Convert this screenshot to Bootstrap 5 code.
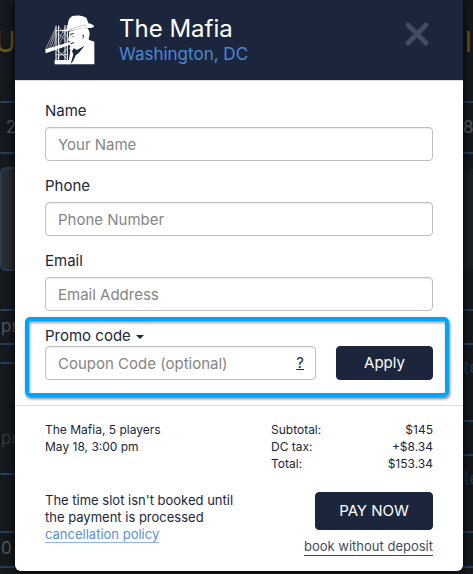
<!DOCTYPE html>
<html lang="en">
<head>
<meta charset="utf-8">
<meta name="viewport" content="width=device-width, initial-scale=1">
<title>The Mafia – Booking</title>
<link href="https://cdn.jsdelivr.net/npm/bootstrap@5.3.0/dist/css/bootstrap.min.css" rel="stylesheet">
<style>
  :root { --navy: #1b263d; --line: #263d59; }
  body { background: #15181d; color: var(--navy); font-family: Inter, "Open Sans", sans-serif; font-size: 15px; line-height: 20px; }
  .booking { border-radius: 0 0 6px 6px; box-shadow: 0 0 10px #000; z-index: 1; }
  .booking-head { background: var(--navy); height: 81px; border-bottom: 1px solid #d9d9d9; padding: 0 30px; }
  .venue-title { font-size: 24px; line-height: 28px; }
  .venue-city { color: #4a88d8; font-size: 17px; line-height: 22px; }
  .close-x { color: #414c62; margin-bottom: 12px; }
  .fields { padding: 20px 30px 6px; }
  .fields .form-label { margin-bottom: 6px; }
  .field + .field { margin-top: 15px; }
  .form-control { height: 34px; padding: 6px 12px; font-size: 15px; line-height: 20px; border-color: #bfbfbf; border-radius: 4px; color: var(--navy); box-shadow: inset 0 1px 1px rgba(0,0,0,.07); }
  .form-control::placeholder { color: #858585; }
  .promo { margin: 0 14px 8px 10px; padding: 5px 12px 13px 16px; border: 4px solid #00a2ff; border-radius: 5px; box-shadow: 1px 2px 3px rgba(0,0,0,.5), inset 1px 2px 3px rgba(0,0,0,.4); }
  .promo-toggle { line-height: 20px; color: var(--navy); }
  .promo-toggle::after { margin-left: 5px; vertical-align: 2px; border-width: 4px 4px 0; }
  .promo .form-control { padding-right: 36px; }
  .promo-row { gap: 20px; }
  .hint { right: 12px; top: 7px; color: var(--navy); }
  .btn-navy { --bs-btn-color: #fff; --bs-btn-bg: var(--navy); --bs-btn-border-color: var(--navy); --bs-btn-hover-color: #fff; --bs-btn-hover-bg: #2a3957; --bs-btn-hover-border-color: #2a3957; --bs-btn-border-radius: 4px; --bs-btn-font-size: 15px; line-height: 20px; }
  .btn-apply { width: 97px; height: 34px; padding: 0; }
  .btn-pay { width: 118px; height: 38px; padding: 0; }
  .summary { border-top: 1px solid #ddd; padding: 15px 30px; font-size: 12px; line-height: 17px; }
  .totals { width: 162px; }
  .totals td { padding: 0; }
  .actions { padding-top: 20px; font-size: 13px; }
  .policy { color: #5b8fd9; text-decoration: none; border-bottom: 1px solid #8fb6ec; line-height: 15px; }
  .no-deposit { color: #434b5e; text-decoration: none; border-bottom: 1px solid #434b5e; }
  /* slivers of the schedule page on both sides of the dialog */
  .edge { flex: none; overflow: hidden; white-space: nowrap; color: #55585c; font-size: 17px; }
  .edge-start { width: 15px; }
  .edge-end { width: 10px; }
  .slot { border-top: 2px solid var(--line); padding-left: 1px; }
  .edge-end .slot { padding-left: 0; }
  .gold { color: #705719; font-size: 28px; height: 101px; line-height: 84px; text-indent: -5px; }
  .edge-end .gold { text-indent: 2px; }
  .h-19 { height: 19px; } .h-34 { height: 34px; line-height: 30px; } .h-35 { height: 35px; line-height: 30px; }
  .h-51 { height: 51px; line-height: 48px; } .h-58 { height: 58px; } .h-77 { height: 77px; line-height: 44px; }
  .h-111 { height: 111px; line-height: 148px; }
  .dim { color: #34383d; }
  .blue { color: #20334b; font-size: 20px; }
  .tile { height: 104px; margin: 13px 0 38px; background: #292c30; border: 2px solid var(--line); border-right: 0; border-radius: 6px 0 0 6px; }
  .tile-end { height: 100px; margin: 15px 0 40px; background: #1c2025; }
</style>
</head>
<body>
<div class="d-flex min-vh-100 overflow-hidden">
  <div class="edge edge-start" aria-hidden="true">
    <div class="gold">U</div>
    <div class="slot h-51">&nbsp;2</div>
    <div class="slot"></div>
    <div class="tile"></div>
    <div class="slot h-34">pr</div>
    <div class="slot h-19"></div>
    <div class="slot h-111 dim">pr</div>
    <div class="slot h-58"></div>
    <div class="slot h-35">0</div>
    <div class="slot"></div>
  </div>

  <main class="booking bg-white flex-grow-1 align-self-start overflow-hidden">
    <header class="booking-head d-flex align-items-center">
      <svg class="flex-shrink-0" width="50" height="52" viewBox="27 18 150 156" role="img" aria-label="The Mafia logo">
        <g fill="none" stroke="#fff">
          <path stroke-width="3" d="M60 53V160M68 53V160M87 51V160M94 51V160"/>
          <path stroke-width="1.5" d="M60 58L29 124M61 62L37 123M62 67L44 120M64 76L52 116M69 58L96 88M69 78L96 106M87 58L65 102M94 58L66 117"/>
          <path stroke-width="2" d="M59 68H98M59 140H95M60 154L94 122M60 124L96 154"/>
        </g>
        <g fill="#fff">
          <path d="M28 124L101 102L103 110L29 136Z"/>
          <path d="M56 156H102V169H56Z"/>
          <path d="M96 63C94 43 98 28 110 24C124 20 146 23 152 31L157 46C167 48 175 52 174 56C168 61 157 60 151 59C132 59 117 66 98 69C86 70 76 69 70 66C80 67 90 65 96 63Z"/>
          <path d="M99 71C119 66 134 58 155 61C162 69 162 80 159 88L158 95L175 101V169H97L103 125C99 122 99 118 103 117L101 111C98 107 101 105 103 103L96 97L99 84Z"/>
        </g>
        <g fill="#1b263d">
          <path d="M101 78L115 75L113 78L102 81ZM106 87L113 84L111 87ZM102 106L113 103L115 105L107 108ZM113 121L123 126L146 113L128 135L119 142L112 158L104 168L112 139L108 130Z"/>
          <path d="M139 81C144 77 146 85 141 92L139 94L141 86Z"/>
        </g>
        <path d="M98 65C116 61 132 52 153 51" fill="none" stroke="#8d93a0" stroke-width="1.5"/>
      </svg>
      <div class="flex-grow-1 ps-4">
        <h1 class="venue-title fw-normal text-white mb-0">The Mafia</h1>
        <div class="venue-city">Washington, DC</div>
      </div>
      <button type="button" class="btn border-0 p-0 close-x" aria-label="Close">
        <svg class="d-block" width="32" height="26" viewBox="0 0 32 26" fill="none" stroke="currentColor" stroke-width="5" stroke-linecap="round"><path d="M7 4L25 22M25 4L7 22"/></svg>
      </button>
    </header>

    <form>
      <div class="fields">
        <div class="field">
          <label class="form-label d-block" for="name">Name</label>
          <input class="form-control" id="name" type="text" placeholder="Your Name">
        </div>
        <div class="field">
          <label class="form-label d-block" for="phone">Phone</label>
          <input class="form-control" id="phone" type="tel" placeholder="Phone Number">
        </div>
        <div class="field">
          <label class="form-label d-block" for="email">Email</label>
          <input class="form-control" id="email" type="email" placeholder="Email Address">
        </div>
      </div>

      <div class="promo">
        <label class="promo-toggle dropdown-toggle d-block" for="coupon">Promo code</label>
        <div class="promo-row d-flex">
          <div class="position-relative flex-grow-1">
            <input class="form-control" id="coupon" type="text" placeholder="Coupon Code (optional)">
            <a class="hint position-absolute" href="#" aria-label="Coupon help">?</a>
          </div>
          <button type="button" class="btn btn-navy btn-apply flex-shrink-0">Apply</button>
        </div>
      </div>

      <div class="summary">
        <div class="d-flex justify-content-between">
          <div>The Mafia, 5 players<br>May 18, 3:00 pm</div>
          <table class="totals">
            <tr><td>Subtotal:</td><td class="text-end">$145</td></tr>
            <tr><td>DC tax:</td><td class="text-end">+$8.34</td></tr>
            <tr><td>Total:</td><td class="text-end">$153.34</td></tr>
          </table>
        </div>
        <div class="actions d-flex justify-content-between">
          <div class="text-nowrap">The time slot isn't booked until<br>the payment is processed<br><a class="policy d-inline-block" href="#">cancellation policy</a></div>
          <div class="d-flex flex-column align-items-end gap-2 text-nowrap">
            <button type="submit" class="btn btn-navy btn-pay">PAY NOW</button>
            <a class="no-deposit" href="#">book without deposit</a>
          </div>
        </div>
      </div>
    </form>
  </main>

  <div class="edge edge-end" aria-hidden="true">
    <div class="gold">l</div>
    <div class="slot h-51">8</div>
    <div class="slot"></div>
    <div class="tile-end"></div>
    <div class="slot h-34"></div>
    <div class="slot h-77 blue">te</div>
    <div class="slot h-34"></div>
    <div class="slot h-77 blue">te</div>
    <div class="slot h-35"></div>
    <div class="slot"></div>
  </div>
</div>
<script src="https://cdn.jsdelivr.net/npm/bootstrap@5.3.0/dist/js/bootstrap.bundle.min.js"></script>
</body>
</html>
